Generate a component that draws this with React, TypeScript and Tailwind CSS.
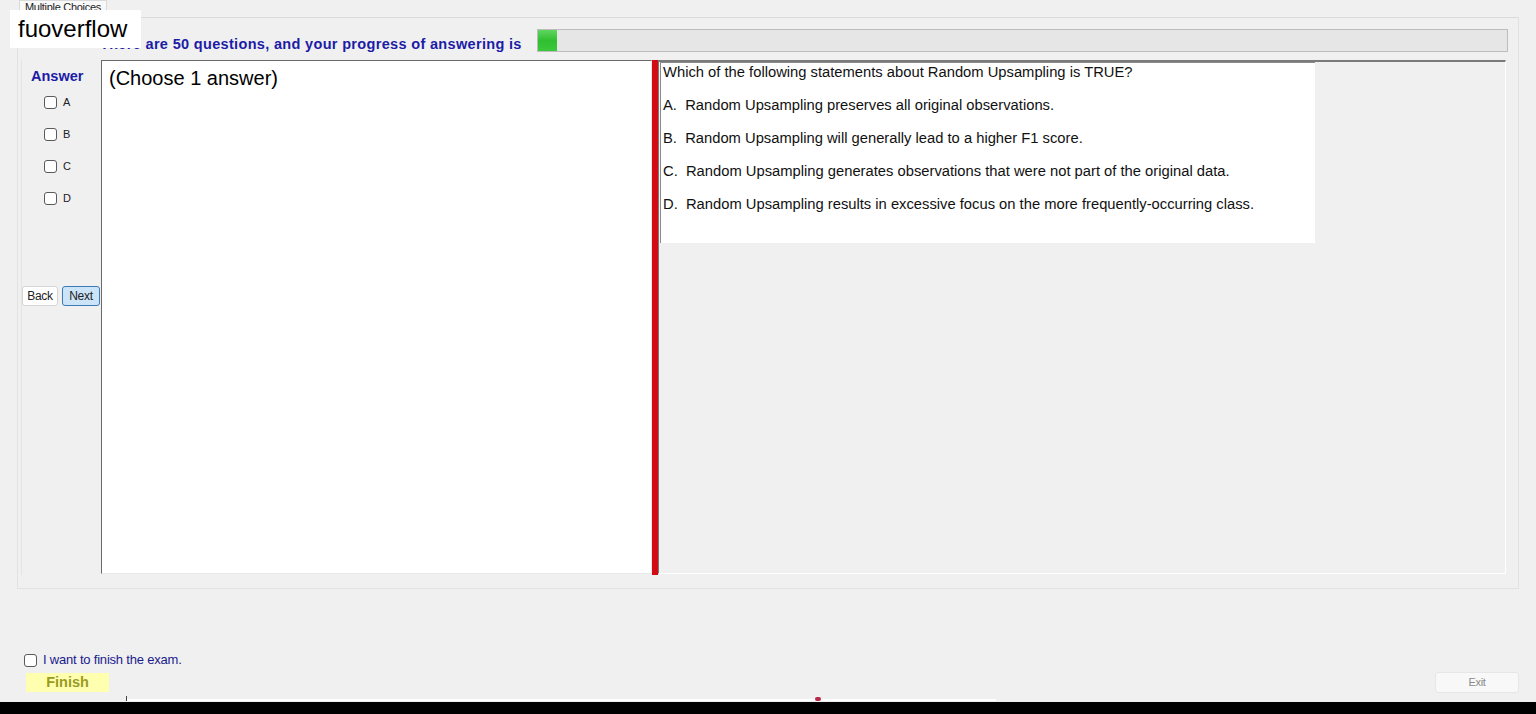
import React from 'react';

// Exam runner window: question list on the left, question text on the right
const options = [
  'A.  Random Upsampling preserves all original observations.',
  'B.  Random Upsampling will generally lead to a higher F1 score.',
  'C.  Random Upsampling generates observations that were not part of the original data.',
  'D.  Random Upsampling results in excessive focus on the more frequently-occurring class.',
];

const CheckBox: React.FC<{ className?: string }> = ({ className = '' }) => (
  <span className={`inline-block w-[13px] h-[13px] rounded-[3px] border border-[#5a5a5a] bg-white ${className}`} />
);

const App: React.FC = () => {
  const answered = 1;
  const total = 50;

  return (
    <div className="relative w-[1536px] h-[714px] overflow-hidden bg-[#f0f0f0] font-['Liberation_Sans',Arial,sans-serif] text-black">
      {/* Tab header */}
      <div className="h-[17px] flex items-end pl-[19px]">
        <div className="h-[17px] px-[5px] bg-[#f9f9f9] border border-b-0 border-[#dadada] text-[11px] leading-[13px] tracking-[-0.3px] text-[#222]">
          Multiple Choices
        </div>
      </div>

      {/* Tab page */}
      <div className="px-[17px]">
        <div className="h-[572px] border border-[#e2e2e2] border-t-[#dadada] bg-[#f0f0f0] flex flex-col">
          {/* Progress row */}
          <div className="mt-[11px] h-[23px] flex items-center pl-[82px] pr-[10px]">
            <span className="text-[14.5px] tracking-[0.33px] font-bold text-[#1c1ca6] mt-[8px] whitespace-nowrap">
              There are {total} questions, and your progress of answering is
            </span>
            <div className="ml-[15px] flex-1 h-[23px] border border-[#bcbcbc] bg-[#e6e6e6] flex">
              <div
                className="h-full bg-gradient-to-b from-[#5fd55f] via-[#2fbf2f] to-[#3cc83c]"
                style={{ width: `${Math.max(2, (answered / total) * 100)}%` }}
              />
            </div>
          </div>

          {/* Main row */}
          <div className="mt-[8px] h-[515px] flex pl-[3px] pr-[12px]">
            {/* Answer column */}
            <div className="w-[80px] flex flex-col border-l border-[#e4e4e4]">
              <div className="mt-[8px] pl-[9px] text-[14.5px] font-bold text-[#1c1ca6] leading-[16px]">Answer</div>
              <div className="mt-[12px] flex flex-col gap-[19px] pl-[22px]">
                {['A', 'B', 'C', 'D'].map((l) => (
                  <label key={l} className="flex items-center h-[13px] gap-[6px] text-[11px] text-[#222]">
                    <CheckBox />
                    {l}
                  </label>
                ))}
              </div>
              <div className="mt-[81px] flex gap-[4px] pl-0">
                <button className="w-[36px] h-[20px] bg-white border border-[#d4d4d4] rounded-[3px] text-[12px] tracking-[-0.3px] text-[#222]">
                  Back
                </button>
                <button className="w-[38px] h-[20px] bg-[#cce4f7] border border-[#3d7ab5] rounded-[3px] text-[12px] tracking-[-0.3px] text-[#222]">
                  Next
                </button>
              </div>
            </div>

            {/* Answer text box */}
            <div className="w-[551px] h-[514px] bg-white border border-[#e8e8e8] border-l-[#6a6a6a] border-t-[#6a6a6a] pl-[7px] pt-[5px]">
              <div className="text-[20px] leading-[24px]">(Choose 1 answer)</div>
            </div>

            {/* Splitter */}
            <div className="w-[6px] h-[515px] bg-[#d20c14]" />

            {/* Question panel */}
            <div className="flex-1 h-[514px] border-t-2 border-l border-[#7a7a7a] border-r border-r-[#ffffff] border-b border-b-[#ffffff] bg-[#f0f0f0] pl-px">
              <div className="w-[655px] h-[181px] bg-white border-l border-t border-[#8a8a8a] pl-[2px] pt-px text-[14.75px] leading-[17px] text-[#111]">
                <div>Which of the following statements about Random Upsampling is TRUE?</div>
                {options.map((o) => (
                  <div key={o} className="mt-[16px] whitespace-pre">
                    {o}
                  </div>
                ))}
              </div>
            </div>
          </div>
        </div>
      </div>

      {/* Finish area */}
      <div className="mt-[64px] h-[14px] flex items-center pl-[24px] gap-[6px]">
        <CheckBox className="rounded-[2px]" />
        <span className="text-[13px] text-[#1a1a8c] tracking-[-0.2px]">I want to finish the exam.</span>
      </div>
      <div className="mt-[5px] h-[21px] flex items-start justify-between pl-[26px] pr-[17px]">
        <button className="mt-px w-[83px] h-[19px] bg-[#ffffb0] text-[14.5px] font-bold text-[#9b9b22] leading-[19px]">
          Finish
        </button>
        <button className="w-[84px] h-[21px] bg-[#f8f8f8] border border-[#e6e6e6] rounded-[3px] text-[11px] text-[#8a8a8a] tracking-[-0.3px]">
          Exit
        </button>
      </div>

      {/* Bottom strip */}
      <div className="mt-[6px] h-[2px] ml-[126px] w-[870px] bg-white relative">
        <span className="absolute left-0 top-[-3px] w-px h-[5px] bg-[#444]" />
        <span className="absolute left-[689px] top-[-2px] w-[6px] h-[4px] rounded-full bg-[#b8284a]" />
      </div>
      <div className="mt-px h-[12px] bg-black" />

      {/* Watermark */}
      <div className="absolute left-[10px] top-[10px] w-[131px] h-[38px] bg-white flex items-center pl-[8px] text-[24px] text-black">
        fuoverflow
      </div>
    </div>
  );
};

export default App;
